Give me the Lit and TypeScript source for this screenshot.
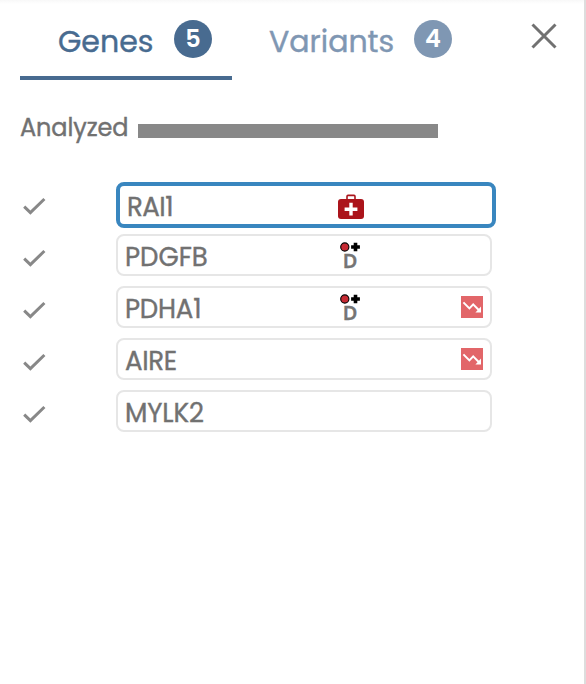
import { LitElement, html, svg, css, nothing } from "lit";
import { customElement, state } from "lit/decorators.js";
import { classMap } from "lit/directives/class-map.js";

type Marker = "kit" | "dominant";
interface Gene {
  name: string;
  spacing: number;
  marker?: Marker;
  declining?: boolean;
}

const GENES: Gene[] = [
  { name: "RAI1", spacing: -0.5, marker: "kit" },
  { name: "PDGFB", spacing: 0, marker: "dominant" },
  { name: "PDHA1", spacing: -0.2, marker: "dominant", declining: true },
  { name: "AIRE", spacing: -0.3, declining: true },
  { name: "MYLK2", spacing: -0.1 },
];

const check = svg`<svg class="check" width="24" height="20" viewBox="0 0 24 20">
  <path d="M2.2 9.6 8.4 15.6 22.4 2" fill="none" stroke="#888" stroke-width="3"/></svg>`;

const kit = svg`<svg width="26" height="26" viewBox="0 0 26 26">
  <path d="M9 6V2.4Q9 1.4 10 1.4H16Q17 1.4 17 2.4V6" fill="none" stroke="#ab141b" stroke-width="1.6"/>
  <rect x="0" y="5" width="26" height="20" rx="3" fill="#ab141b"/>
  <path d="M13 8.8V21.6M6.6 15.2H19.4" stroke="#fff" stroke-width="3.4"/></svg>`;

const dots = svg`<svg class="dots" width="20" height="10" viewBox="0 0 20 10">
  <circle cx="4.8" cy="5" r="4.1" fill="#c62a33" stroke="#000" stroke-width="1.1"/>
  <path d="M15.5 .7V9.3M11.1 5H19.9" stroke="#000" stroke-width="3.6"/></svg>`;

const decline = svg`<svg class="decline" width="22" height="22" viewBox="0 0 22 22">
  <rect width="22" height="22" fill="#e26669"/>
  <path d="M2.4 6.4 8.4 12.4 12.2 8.4 18 14.2" fill="none" stroke="#fff" stroke-width="2"/>
  <path d="M20 10.4V16.6H14.4Z" fill="#fff"/></svg>`;

@customElement("gene-row")
export class GeneRow extends LitElement {
  static properties = { gene: { attribute: false }, selected: { type: Boolean } };
  declare gene: Gene;
  declare selected: boolean;

  static styles = css`
    :host { display: grid; grid-template-columns: 96px 380px; height: 52px; align-items: start; }
    .check { display: block; margin: 18px 0 0 2px; }
    .box {
      box-sizing: border-box; width: 376px; height: 42px; margin-top: 3px; padding: 0 7px;
      border: 2px solid #e6e6e6; border-radius: 8px; background: #fff;
      display: grid; grid-template: 38px / 213px 1fr 22px; align-items: center;
      color: #717171;
    }
    .box.selected { width: 380px; height: 46px; border: 4px solid #3986bf; }
    .name { align-self: start; margin-top: 2px; font-size: 26px; line-height: 38px; -webkit-text-stroke: 0.4px currentColor; white-space: nowrap; }
    .kit { height: 26px; margin: 3px 0 0 -2px; }
    .dominant { width: 22px; height: 34px; display: flex; flex-direction: column; align-items: center; margin: 2px 0 0 1px; }
    .dots { display: block; margin-top: 3px; }
    .letter { font: 600 20px/18px "Noto Sans", sans-serif; color: #757575; -webkit-text-stroke: 0.3px currentColor; }
    .decline { display: block; grid-column: 3; }
    svg { display: block; }
  `;

  render() {
    const g = this.gene;
    return html`${check}
      <div class=${classMap({ box: true, selected: this.selected })}>
        <span class="name" style="letter-spacing:${g.spacing}px">${g.name}</span>
        ${g.marker === "kit" ? html`<span class="kit">${kit}</span>` : nothing}
        ${g.marker === "dominant"
          ? html`<span class="dominant">${dots}<span class="letter">D</span></span>`
          : nothing}
        ${g.declining ? decline : nothing}
      </div>`;
  }
}

@customElement("app-root")
export class AppRoot extends LitElement {
  @state() private selected = "RAI1";

  static styles = css`
    :host {
      display: block; box-sizing: border-box; width: 586px; height: 684px; overflow: hidden;
      border-right: 2px solid #ddd; background: linear-gradient(#f8f8f8, #fff 4px);
      font-family: Poppins, Inter, sans-serif; color: #717171;
    }
    header { display: flex; height: 80px; padding-left: 20px; }
    .tab { box-sizing: border-box; display: flex; height: 80px; padding-top: 20px; color: #7f97b3; }
    .tab.active { width: 212px; padding-left: 38px; border-bottom: 4px solid #486b90; color: #486b90; }
    .tab.other { width: 262px; padding-left: 37px; }
    .label { font-size: 30px; line-height: 44px; white-space: nowrap; -webkit-text-stroke: 0.4px currentColor; }
    .active .label { width: 116px; }
    .other .label { width: 145px; }
    .count {
      width: 38px; height: 38px; border-radius: 50%; background: currentColor;
      display: flex; justify-content: center;
    }
    .count span { color: #fff; font-size: 24px; font-weight: 600; line-height: 38px; }
    .close { display: block; margin: 23px 0 0 37px; }
    .analyzed { display: flex; height: 40px; margin: 27px 0 0 20px; }
    .caption { width: 118px; font-size: 24px; line-height: 41px; white-space: nowrap; letter-spacing: -0.1px; -webkit-text-stroke: 0.4px currentColor; }
    .bar { width: 300px; height: 14px; margin-top: 17px; background: #888; }
    .list { display: block; margin: 32px 0 0 20px; }
  `;

  render() {
    return html`
      <header>
        <div class="tab active"><span class="label">Genes</span><span class="count"><span>5</span></span></div>
        <div class="tab other"><span class="label">Variants</span><span class="count"><span>4</span></span></div>
        <svg class="close" width="26" height="26" viewBox="0 0 26 26">
          <path d="M1.5 1.5 24.5 24.5M24.5 1.5 1.5 24.5" stroke="#717171" stroke-width="3"/>
        </svg>
      </header>
      <div class="analyzed"><span class="caption">Analyzed</span><span class="bar"></span></div>
      <div class="list">
        ${GENES.map((g) => html`<gene-row .gene=${g} .selected=${g.name === this.selected}></gene-row>`)}
      </div>`;
  }
}
